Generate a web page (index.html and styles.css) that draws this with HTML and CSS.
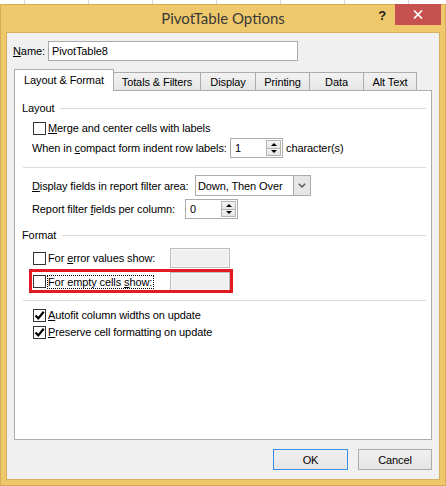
FILE: index.html
```html
<!DOCTYPE html>
<html>
<head>
<meta charset="utf-8">
<title>PivotTable Options</title>
<link rel="stylesheet" href="styles.css">
</head>
<body>
<div class="sheet"></div>
<div class="window">
  <div class="titlebar">
    <div class="title">PivotTable Options</div>
    <div class="controls">
      <div class="help">?</div>
      <div class="close"><svg width="10" height="9" viewBox="0 0 10 9"><path d="M1 0.5 L9 8.5 M9 0.5 L1 8.5" stroke="#fff" stroke-width="1.7" fill="none"/></svg></div>
    </div>
  </div>
  <div class="client">
    <div class="name-row">
      <div class="name-label"><u>N</u>ame:</div>
      <div class="textbox">PivotTable8</div>
    </div>
    <div class="tabs">
      <div class="tab active w1">Layout &amp; Format</div>
      <div class="tab w2">Totals &amp; Filters</div>
      <div class="tab w3">Display</div>
      <div class="tab w4">Printing</div>
      <div class="tab w5">Data</div>
      <div class="tab w6">Alt Text</div>
    </div>
    <div class="panel">
      <div class="section first"><span>Layout</span><div class="line"></div></div>
      <div class="row cbrow r-merge">
        <div class="cb"></div><div class="cblabel"><u>M</u>erge and center cells with labels</div>
      </div>
      <div class="row txtrow r-compact">
        <div class="lbl lbl-compact">When in <u>c</u>ompact form indent row labels:</div>
        <div class="spin"><span class="val">1</span><div class="spinbtns"><span><i class="up"></i></span><span><i class="down"></i></span></div></div>
        <div class="after">character(s)</div>
      </div>
      <div class="sep s1"></div>
      <div class="row txtrow r-display">
        <div class="lbl lbl-display"><u>D</u>isplay fields in report filter area:</div>
        <div class="combo"><span class="val">Down, Then Over</span><div class="arrow"><svg width="8" height="5" viewBox="0 0 8 5"><path d="M0.8 0.8 L4 4 L7.2 0.8" stroke="#555" stroke-width="1.4" fill="none"/></svg></div></div>
      </div>
      <div class="row txtrow r-report">
        <div class="lbl lbl-report">Report filter <u>f</u>ields per column:</div>
        <div class="spin"><span class="val">0</span><div class="spinbtns"><span><i class="up"></i></span><span><i class="down"></i></span></div></div>
      </div>
      <div class="section second"><span>Format</span><div class="line"></div></div>
      <div class="row cbrow r-error">
        <div class="cb"></div>
        <div class="fmtbox"><div class="cblabel">For <u>e</u>rror values show:</div></div>
        <div class="fmt-input"></div>
      </div>
      <div class="row cbrow r-empty">
        <div class="cb"></div>
        <div class="fmtbox"><div class="cblabel focus">For empty cells <u>s</u>how:</div></div>
        <div class="fmt-input"></div>
      </div>
      <div class="sep s2"></div>
      <div class="row cbrow r-autofit">
        <div class="cb"><svg width="11" height="11" viewBox="0 0 11 11"><path d="M1.5 5.4 L4.3 8.4 L9.7 1.7" stroke="#000" stroke-width="2.2" fill="none"/></svg></div>
        <div class="cblabel"><u>A</u>utofit column widths on update</div>
      </div>
      <div class="row cbrow r-preserve">
        <div class="cb"><svg width="11" height="11" viewBox="0 0 11 11"><path d="M1.5 5.4 L4.3 8.4 L9.7 1.7" stroke="#000" stroke-width="2.2" fill="none"/></svg></div>
        <div class="cblabel"><u>P</u>reserve cell formatting on update</div>
      </div>
      <div class="highlight"></div>
    </div>
    <div class="buttons">
      <div class="btn default">OK</div>
      <div class="btn">Cancel</div>
    </div>
  </div>
</div>
</body>
</html>
```
FILE: styles.css
```css
* { box-sizing: border-box; }
html, body { margin: 0; padding: 0; }
body {
  width: 446px;
  height: 486px;
  overflow: hidden;
  background: #fff;
  font-family: "Liberation Sans", Arial, sans-serif;
  font-size: 11px;
  letter-spacing: -0.1px;
  color: #000;
}
u { text-decoration: underline; text-underline-offset: 1px; }

.sheet {
  height: 4px;
  background: repeating-linear-gradient(to right, #fff 0 24px, #d4d4d4 24px 25px, #fff 25px 64px);
}

.window {
  height: 482px;
  background: #efc86c;
  border: 1px solid #d2ac57;
  padding: 0 5px 5px;
  display: flex;
  flex-direction: column;
}

.titlebar {
  height: 27px;
  margin: 0 -5px;
  display: grid;
  grid-template-columns: 1fr auto 1fr;
  align-items: start;
}
.title {
  grid-column: 2;
  align-self: center;
  font-family: Lato, "Liberation Sans", sans-serif;
  font-size: 15px;
  letter-spacing: 0;
  color: #3a3a3a;
  padding-bottom: 2px;
}
.controls {
  grid-column: 3;
  justify-self: end;
  display: flex;
  align-items: flex-start;
}
.help {
  font-family: "Liberation Sans", sans-serif;
  font-weight: bold;
  font-size: 13px;
  color: #222;
  margin-top: 3px;
  margin-right: 9px;
}
.close {
  width: 46px;
  height: 21px;
  margin-top: -1px;
  margin-right: 4px;
  background: #c75050;
  display: flex;
  align-items: center;
  justify-content: center;
}

.client {
  flex: 1;
  background: #f0f0f0;
  border: 1px solid #d6b05d;
  padding: 8px 7px 0 7px;
  display: flex;
  flex-direction: column;
}

.name-row {
  display: flex;
  align-items: center;
  height: 20px;
  margin-left: -1px;
}
.name-label { width: 35px; }
.textbox {
  width: 250px;
  height: 20px;
  border: 1px solid #ababab;
  background: #fff;
  padding-left: 3px;
  display: flex;
  align-items: center;
}

.tabs {
  margin-top: 8px;
  height: 21px;
  display: flex;
  align-items: flex-end;
  position: relative;
  z-index: 1;
}
.tab {
  height: 18px;
  border: 1px solid #acacac;
  border-bottom: none;
  background: linear-gradient(#f2f2f2, #e6e6e6);
  display: flex;
  align-items: center;
  justify-content: center;
  margin-left: -1px;
  white-space: nowrap;
}
.tab.active {
  height: 22px;
  margin-bottom: -1px;
  margin-left: 0;
  background: #fff;
  position: relative;
  z-index: 2;
  padding-bottom: 2px;
}
.w1 { width: 100px; }
.w2 { width: 88px; }
.w3 { width: 56px; }
.w4 { width: 55px; }
.w5 { width: 55px; }
.w6 { width: 54px; }

.panel {
  height: 350px;
  background: #fff;
  border: 1px solid #acacac;
  padding: 0 5px 0 7px;
  display: flex;
  flex-direction: column;
  position: relative;
}

.section {
  height: 16px;
  display: flex;
  align-items: center;
}
.section.first { margin-top: 9px; }
.section.second { margin-top: 8px; }
.section .line {
  flex: 1;
  height: 1px;
  background: #dcdcdc;
  margin-left: 6px;
}

.sep { height: 1px; background: #dcdcdc; margin-left: 1px; }
.s1 { margin-top: 9px; }
.s2 { margin-top: 9px; }

.row { display: flex; align-items: center; }
.cbrow { padding-left: 11px; }
.txtrow { padding-left: 10px; }

.r-merge { height: 16px; margin-top: 4px; }
.r-compact { height: 20px; margin-top: 2px; }
.r-display { height: 21px; margin-top: 7px; }
.r-report { height: 20px; margin-top: 3px; }
.r-error { height: 20px; margin-top: 5px; }
.r-empty { height: 19px; margin-top: 4px; }
.r-autofit { height: 16px; margin-top: 6px; }
.r-preserve { height: 16px; margin-top: 1px; }

.cb {
  width: 13px;
  height: 13px;
  flex: none;
  border: 1px solid #333;
  background: #fff;
  display: flex;
  align-items: center;
  justify-content: center;
}
.cblabel { margin-left: 2px; white-space: nowrap; }
.cblabel.focus {
  margin-left: 1px;
  border: 1px dotted #000;
  height: 14px;
  line-height: 12px;
  padding-right: 1px;
}
.fmtbox { width: 124px; display: flex; }

.fmt-input {
  width: 60px;
  height: 20px;
  border: 1px solid #bdbdbd;
  background: #efefef;
  box-shadow: inset 0 0 0 1px #f7f7f7;
}
.r-empty .fmt-input { height: 19px; }

.lbl { white-space: nowrap; flex: none; }
.lbl-compact { width: 198px; }
.lbl-display { width: 163px; }
.lbl-report { width: 153px; }

.spin {
  width: 53px;
  height: 100%;
  border: 1px solid #acacac;
  background: #fff;
  display: flex;
  align-items: center;
  padding: 0 1px 0 4px;
}
.spin .val { flex: 1; }
.spinbtns {
  width: 15px;
  height: 16px;
  display: flex;
  flex-direction: column;
}
.spinbtns span {
  flex: 1;
  border: 1px solid #b4b4b4;
  background: linear-gradient(#f4f4f4, #e4e4e4);
  display: flex;
  align-items: center;
  justify-content: center;
}
.spinbtns span + span { border-top: none; }
.up, .down {
  width: 0;
  height: 0;
  border-left: 3px solid transparent;
  border-right: 3px solid transparent;
}
.up { border-bottom: 3px solid #000; }
.down { border-top: 3px solid #000; }
.after { margin-left: 3px; white-space: nowrap; }

.combo {
  width: 116px;
  height: 100%;
  border: 1px solid #acacac;
  background: #fff;
  display: flex;
  align-items: center;
  padding-left: 2px;
}
.combo .val { flex: 1; white-space: nowrap; }
.combo .arrow {
  width: 17px;
  align-self: stretch;
  border-left: 1px solid #acacac;
  background: #e6e6e6;
  display: flex;
  align-items: center;
  justify-content: center;
}

.highlight {
  position: absolute;
  left: 14px;
  top: 178px;
  width: 204px;
  height: 24px;
  border: 3px solid #e21b23;
}

.buttons {
  margin-top: 9px;
  display: flex;
  justify-content: flex-end;
  gap: 10px;
}
.btn {
  width: 74px;
  height: 21px;
  border: 1px solid #acacac;
  background: linear-gradient(#f0f0f0, #e5e5e5);
  display: flex;
  align-items: center;
  justify-content: center;
}
.btn.default { width: 75px; border-color: #3c8ee4; }
```
